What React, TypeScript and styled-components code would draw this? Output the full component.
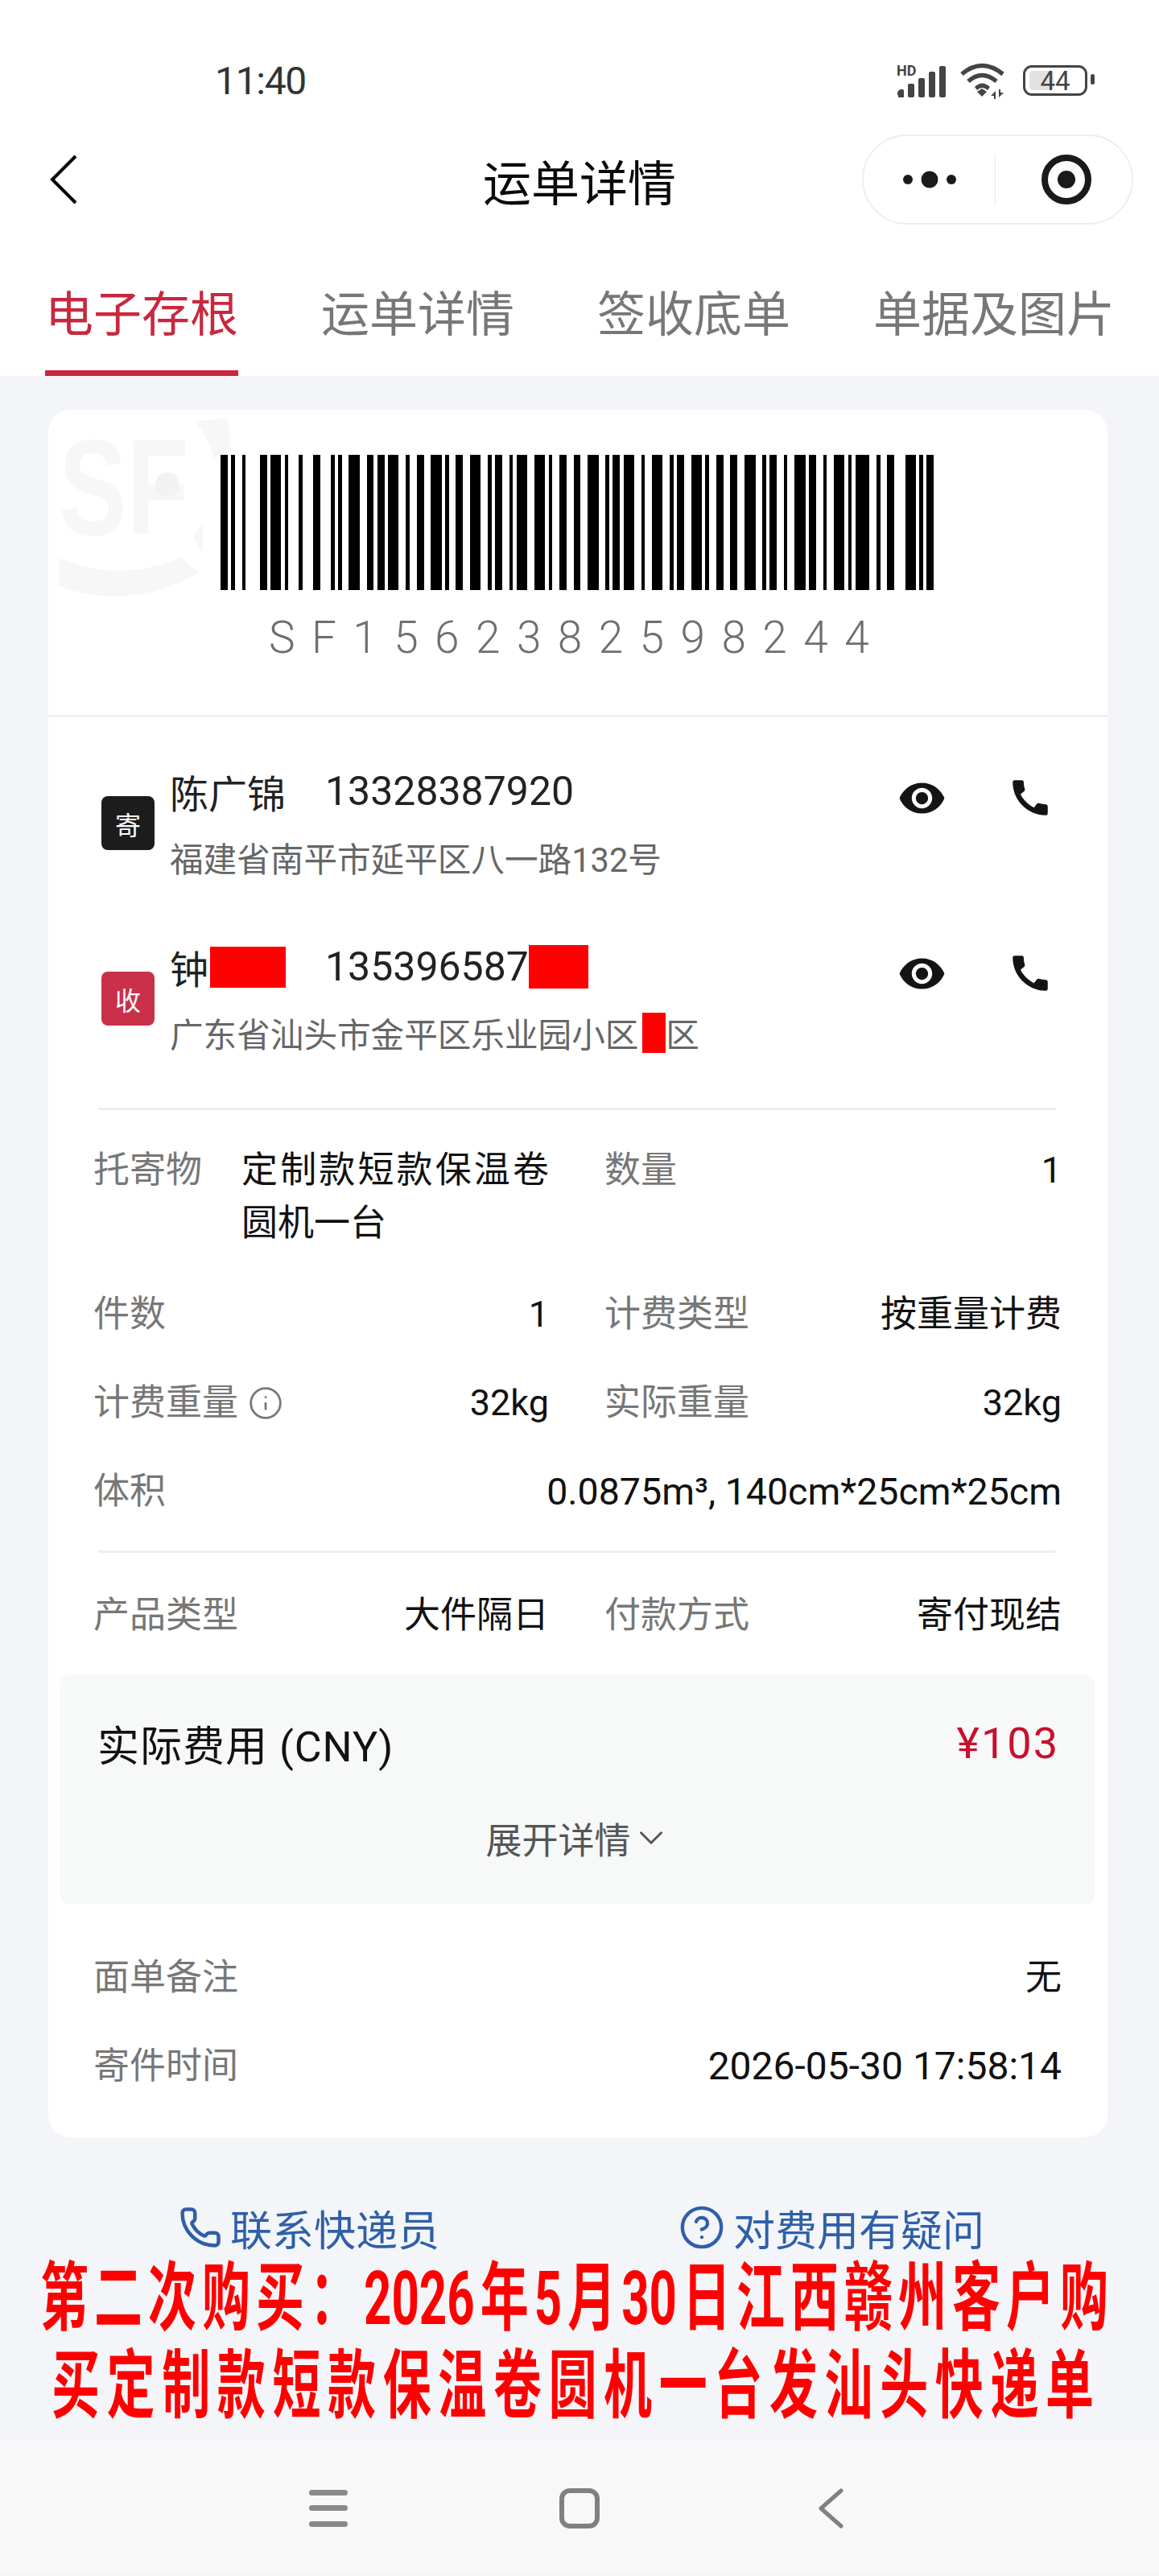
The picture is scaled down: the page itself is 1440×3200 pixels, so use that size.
import styled, { createGlobalStyle } from 'styled-components';
import { MdCall, MdVisibility } from 'react-icons/md';
import { ChevronDown, CircleHelp, Info, Phone } from 'lucide-react';

const GlobalStyle = createGlobalStyle`
  html, body {
    margin: 0;
    padding: 0;
    background: #f3f5f9;
  }
  * {
    box-sizing: border-box;
  }
`;

const Page = styled.div`
  width: 1440px;
  height: 3200px;
  overflow: hidden;
  background: #f3f5f9;
  color: #111;
  font-family: Roboto, 'Noto Sans CJK SC', sans-serif;
`;

const Header = styled.header`
  background: #fff;
`;

const StatusBar = styled.div`
  height: 167px;
  padding: 33px 81px 0 267px;
  display: flex;
  align-items: center;
  justify-content: space-between;
`;

const Clock = styled.span`
  font-size: 48px;
  letter-spacing: -1.3px;
  color: #333;
`;

const StatusIcons = styled.div`
  display: flex;
  align-items: center;
  gap: 17px;
`;

const Battery = styled.div`
  position: relative;
  width: 80px;
  height: 38px;
  margin-right: 8px;
  border: 3.5px solid #444;
  border-radius: 11px;
  display: flex;
  align-items: center;
  justify-content: center;
  font-size: 33px;
  color: #444;

  &::before {
    content: '';
    position: absolute;
    left: 5px;
    top: 4px;
    bottom: 4px;
    width: 30px;
    border-radius: 4px;
    background: #e2e2e2;
  }

  &::after {
    content: '';
    position: absolute;
    right: -12px;
    top: 8px;
    width: 5px;
    height: 13px;
    border-radius: 3px;
    background: #444;
  }
`;

const BatteryLevel = styled.span`
  position: relative;
`;

const NavBar = styled.nav`
  height: 112px;
  padding: 0 32px;
  display: grid;
  grid-template-columns: 1fr auto 1fr;
  align-items: center;
`;

const BackIcon = styled.svg`
  margin-left: 30px;
`;

const NavTitle = styled.h1`
  margin: 0;
  font-size: 60px;
  font-weight: 400;
  color: #0a0a0a;
`;

const Capsule = styled.div`
  justify-self: end;
  width: 337px;
  height: 112px;
  border: 2px solid #eeeeee;
  border-radius: 56px;
  display: flex;
  align-items: center;
`;

const CapsuleCell = styled.div<{ $nudge?: number }>`
  flex: 1;
  padding-left: ${(p) => p.$nudge ?? 0}px;
  display: flex;
  justify-content: center;
  align-items: center;
`;

const CapsuleDivider = styled.div`
  width: 1px;
  height: 64px;
  background: #e8e8e8;
`;

const Tabs = styled.div`
  height: 188px;
  padding: 0 0 0 56px;
  display: flex;
  gap: 103px;
`;

const Tab = styled.div<{ $active?: boolean }>`
  height: 100%;
  padding-top: 76px;
  font-size: 60px;
  line-height: 74px;
  color: ${(p) => (p.$active ? '#c8283f' : '#777')};
  border-bottom: 7px solid ${(p) => (p.$active ? '#c8283f' : 'transparent')};
`;

const Card = styled.main`
  position: relative;
  margin: 42px 64px 0 60px;
  background: #fff;
  border-radius: 28px;
  overflow: hidden;
`;

const Watermark = styled.svg`
  position: absolute;
  left: 0;
  top: 0;
`;

const BarcodeBlock = styled.section`
  position: relative;
  height: 382px;
  padding: 56px 0 0 214px;
  border-bottom: 3px solid #f0f0f0;
`;

const BarcodeInner = styled.div`
  position: relative;
  width: 886px;
  display: flex;
  flex-direction: column;
  align-items: center;
`;

const WaybillNo = styled.div`
  margin-top: 26px;
  font-size: 55px;
  line-height: 66px;
  font-weight: 300;
  letter-spacing: 20.4px;
  color: #6f6f6f;
`;

const People = styled.section`
  padding: 62px 67px 66px 66px;
  display: flex;
  flex-direction: column;
  gap: 79px;
`;

const PersonRow = styled.div`
  display: grid;
  grid-template-columns: 66px 1fr auto;
  column-gap: 19px;
  align-items: center;
`;

const Badge = styled.div<{ $tone: 'dark' | 'red' }>`
  height: 67px;
  border-radius: 8px;
  display: flex;
  align-items: center;
  justify-content: center;
  font-size: 32px;
  color: #fff;
  background: ${(p) => (p.$tone === 'dark' ? '#1c1c1c' : '#c9304a')};
`;

const PersonText = styled.div`
  display: flex;
  flex-direction: column;
  gap: 25px;
`;

const NameLine = styled.div`
  height: 60px;
  display: flex;
  align-items: center;
  font-size: 48px;
  color: #222;
`;

const Name = styled.span`
  width: 193px;
  display: flex;
  align-items: center;
`;

const PhoneNumber = styled.span`
  font-size: 50px;
  display: flex;
  align-items: center;
`;

const AddressLine = styled.div`
  height: 54px;
  display: flex;
  align-items: center;
  font-size: 41.6px;
  color: #666;
`;

const Redact = styled.span<{ $w: number; $h: number; $lead?: number; $gap?: number }>`
  display: inline-block;
  width: ${(p) => p.$w}px;
  height: ${(p) => p.$h}px;
  margin-left: ${(p) => p.$lead ?? 0}px;
  margin-right: ${(p) => p.$gap ?? 0}px;
  background: #ff0000;
`;

const PersonActions = styled.div`
  align-self: start;
  margin-top: 8px;
  height: 60px;
  display: flex;
  align-items: center;
  gap: 75px;
  color: #141414;
`;

const Rule = styled.div`
  height: 3px;
  margin: 0 64px 0 62px;
  background: #eeeeee;
`;

const InfoGrid = styled.section<{ $pad: string }>`
  padding: ${(p) => p.$pad};
  display: grid;
  grid-template-columns: 566px 568px;
  column-gap: 69px;
  row-gap: 50px;
`;

const InfoCell = styled.div<{ $wide?: boolean; $tall?: boolean }>`
  display: flex;
  justify-content: space-between;
  grid-column: ${(p) => (p.$wide ? 'span 2' : 'auto')};
  font-size: 45px;
  line-height: ${(p) => (p.$tall ? '66px' : '60px')};
`;

const InfoLabel = styled.span`
  display: inline-flex;
  align-items: flex-start;
  gap: 12px;
  flex: none;
  color: #777;
`;

const InfoHint = styled.span`
  display: inline-flex;
  height: 60px;
  align-items: center;
`;

const InfoValue = styled.span<{ $size?: number }>`
  color: #111;
  white-space: nowrap;
  font-size: ${(p) => p.$size ?? 45}px;
`;

const GoodsValue = styled.span`
  width: 382px;
  color: #111;
  text-align: justify;
`;

const FeePanel = styled.section`
  margin: 0 16px 0 15px;
  padding: 54px 44px 52px 46px;
  border-radius: 10px;
  background: #f7f8f8;
  display: flex;
  flex-direction: column;
  gap: 58px;
`;

const FeeRow = styled.div`
  display: flex;
  justify-content: space-between;
  align-items: center;
  height: 60px;
  font-size: 52px;
  letter-spacing: 1px;
  color: #111;
`;

const FeeAmount = styled.span`
  font-size: 54px;
  letter-spacing: 2px;
  color: #c8102e;
`;

const Expand = styled.div`
  height: 60px;
  display: flex;
  justify-content: center;
  align-items: center;
  font-size: 45px;
  color: #555;
`;

const Footnotes = styled.section`
  padding: 62px 57px 58px 56px;
  display: flex;
  flex-direction: column;
  gap: 50px;
`;

const Actions = styled.div`
  height: 60px;
  margin-top: 82px;
  padding-left: 222px;
  display: flex;
  gap: 297px;
`;

const ActionLink = styled.a`
  display: flex;
  align-items: center;
  gap: 10px;
  font-size: 52px;
  color: #2f5fa8;
`;

const Notice = styled.section`
  margin: 4px 0 12px;
  display: flex;
  flex-direction: column;
  align-items: flex-start;
`;

const NoticeLine = styled.div<{ $left: number; $width: number }>`
  margin-left: ${(p) => p.$left}px;
  width: ${(p) => p.$width}px;
  height: 109px;
  font-size: 60px;
  line-height: 109px;
  font-weight: 700;
  color: #ff0000;
  white-space: nowrap;
  text-align: justify;
  text-align-last: justify;
  transform: scaleY(1.55);
`;

const BottomNav = styled.nav`
  height: 167px;
  padding-top: 3px;
  background: #f8f8f8;
  display: grid;
  grid-template-columns: repeat(3, 312px);
  justify-content: center;
  align-items: center;
  justify-items: center;
`;

const BARCODE = [
  2, 1, 1, 2, 1, 4, 2, 1, 3, 1, 1, 3, 1, 3, 2, 3, 1, 1, 1, 2, 3, 2, 2, 1, 2, 1, 3, 2, 1, 2, 2, 2, 3, 1, 1, 2,
  2, 2, 3, 2, 1, 1, 2, 2, 1, 1, 3, 2, 3, 1, 1, 2, 2, 2, 2, 2, 3, 2, 1, 1, 2, 1, 3, 2, 1, 2, 3, 2, 1, 1, 2, 2,
  3, 1, 1, 2, 2, 2, 2, 2, 3, 2, 1, 1, 2, 2, 1, 2, 3, 1, 2, 2, 1, 2, 3, 1, 1, 1, 4, 2, 1, 2, 2, 3, 3, 1, 1, 1, 2,
];

function Barcode() {
  let x = 0;
  const bars = BARCODE.map((w, i) => {
    const bar = i % 2 === 0 ? <rect key={i} x={x} y={0} width={w} height={1} fill="#000" /> : null;
    x += w;
    return bar;
  });
  return (
    <svg width={886} height={168} viewBox="0 0 200 1" preserveAspectRatio="none" shapeRendering="crispEdges">
      {bars}
    </svg>
  );
}

function SfWatermark() {
  const tint = '#f6f7f6';
  return (
    <Watermark width={240} height={240} viewBox="0 0 240 240">
      <text
        x={13}
        y={155}
        fontSize={168}
        fontWeight={700}
        fontFamily="'Liberation Sans', sans-serif"
        fill={tint}
        textLength={162}
        lengthAdjust="spacingAndGlyphs"
      >
        SF
      </text>
      <circle cx={148} cy={93} r={15} fill="#f1f2f1" />
      <path d="M13 184 Q90 216 165 183 L187 203 Q100 251 13 219 Z" fill={tint} />
      <path d="M182 14 L222 11 Q228 30 224 56 L205 60 Q200 35 182 14 Z" fill={tint} />
      <path d="M192 140 L192 178 L180 158 Z" fill={tint} />
    </Watermark>
  );
}

function StatusGlyphs() {
  return (
    <svg width={140} height={46} viewBox="0 0 140 46">
      <text x={0} y={17} fontSize={18} fontWeight={700} fill="#444" fontFamily="Roboto, sans-serif">
        HD
      </text>
      <path d="M2 42 a5 5 0 0 1 7 -7 v9 h-7 z" fill="#444" />
      <rect x={14} y={27} width={8} height={17} rx={2} fill="#444" />
      <rect x={27} y={20} width={8} height={24} rx={2} fill="#444" />
      <rect x={40} y={12} width={8} height={32} rx={2} fill="#444" />
      <rect x={53} y={5} width={8} height={39} rx={2} fill="#444" />
      <g fill="none" stroke="#444" strokeWidth={5.5}>
        <path d="M81 15 Q106 -6 132 15" />
        <path d="M89 24 Q106 9 124 24" />
      </g>
      <path d="M97 31 Q106 22 116 31 L113 35 Q106 29 100 35 Z" fill="#444" />
      <path d="M100 37 L106 33 L112 37 L106 43 Z" fill="#444" />
      <path d="M117 42 L123 36 V46 H121 V42 Z M127 34 H129 V38 L133 38 L127 44 Z" fill="#444" />
    </svg>
  );
}

export default function App() {
  return (
    <Page>
      <GlobalStyle />
      <Header>
        <StatusBar>
          <Clock>11:40</Clock>
          <StatusIcons>
            <StatusGlyphs />
            <Battery>
              <BatteryLevel>44</BatteryLevel>
            </Battery>
          </StatusIcons>
        </StatusBar>
        <NavBar>
          <BackIcon width={34} height={62} viewBox="0 0 34 62">
            <polyline points="32,2 3,31 32,60" fill="none" stroke="#000" strokeWidth={4} />
          </BackIcon>
          <NavTitle>运单详情</NavTitle>
          <Capsule>
            <CapsuleCell>
              <svg width={66} height={24} viewBox="0 0 66 24" fill="#1a1a1a">
                <circle cx={6} cy={12} r={6} />
                <circle cx={33} cy={12} r={10.5} />
                <circle cx={60} cy={12} r={6} />
              </svg>
            </CapsuleCell>
            <CapsuleDivider />
            <CapsuleCell $nudge={6}>
              <svg width={64} height={64} viewBox="0 0 64 64">
                <circle cx={32} cy={32} r={27} fill="none" stroke="#1a1a1a" strokeWidth={8} />
                <circle cx={32} cy={32} r={11} fill="#1a1a1a" />
              </svg>
            </CapsuleCell>
          </Capsule>
        </NavBar>
        <Tabs>
          <Tab $active>电子存根</Tab>
          <Tab>运单详情</Tab>
          <Tab>签收底单</Tab>
          <Tab>单据及图片</Tab>
        </Tabs>
      </Header>

      <Card>
        <BarcodeBlock>
          <SfWatermark />
          <BarcodeInner>
            <Barcode />
            <WaybillNo>SF1562382598244</WaybillNo>
          </BarcodeInner>
        </BarcodeBlock>

        <People>
          <PersonRow>
            <Badge $tone="dark">寄</Badge>
            <PersonText>
              <NameLine>
                <Name>陈广锦</Name>
                <PhoneNumber>13328387920</PhoneNumber>
              </NameLine>
              <AddressLine>福建省南平市延平区八一路132号</AddressLine>
            </PersonText>
            <PersonActions>
              <MdVisibility size={61} />
              <MdCall size={58} />
            </PersonActions>
          </PersonRow>
          <PersonRow>
            <Badge $tone="red">收</Badge>
            <PersonText>
              <NameLine>
                <Name>
                  钟<Redact $w={94} $h={51} $lead={2} />
                </Name>
                <PhoneNumber>
                  135396587
                  <Redact $w={74} $h={54} />
                </PhoneNumber>
              </NameLine>
              <AddressLine>
                广东省汕头市金平区乐业园小区
                <Redact $w={29} $h={50} $lead={5} />区
              </AddressLine>
            </PersonText>
            <PersonActions>
              <MdVisibility size={61} />
              <MdCall size={58} />
            </PersonActions>
          </PersonRow>
        </People>

        <Rule />

        <InfoGrid $pad="42px 57px 43px 56px">
          <InfoCell $tall>
            <InfoLabel>托寄物</InfoLabel>
            <GoodsValue>定制款短款保温卷圆机一台</GoodsValue>
          </InfoCell>
          <InfoCell $tall>
            <InfoLabel>数量</InfoLabel>
            <InfoValue>1</InfoValue>
          </InfoCell>
          <InfoCell>
            <InfoLabel>件数</InfoLabel>
            <InfoValue>1</InfoValue>
          </InfoCell>
          <InfoCell>
            <InfoLabel>计费类型</InfoLabel>
            <InfoValue>按重量计费</InfoValue>
          </InfoCell>
          <InfoCell>
            <InfoLabel>
              计费重量
              <InfoHint>
                <Info size={44} strokeWidth={1.5} />
              </InfoHint>
            </InfoLabel>
            <InfoValue>32kg</InfoValue>
          </InfoCell>
          <InfoCell>
            <InfoLabel>实际重量</InfoLabel>
            <InfoValue>32kg</InfoValue>
          </InfoCell>
          <InfoCell $wide>
            <InfoLabel>体积</InfoLabel>
            <InfoValue $size={46.5}>0.0875m³, 140cm*25cm*25cm</InfoValue>
          </InfoCell>
        </InfoGrid>

        <Rule />

        <InfoGrid $pad="48px 57px 44px 56px">
          <InfoCell>
            <InfoLabel>产品类型</InfoLabel>
            <InfoValue>大件隔日</InfoValue>
          </InfoCell>
          <InfoCell>
            <InfoLabel>付款方式</InfoLabel>
            <InfoValue>寄付现结</InfoValue>
          </InfoCell>
        </InfoGrid>

        <FeePanel>
          <FeeRow>
            实际费用 (CNY)
            <FeeAmount>¥103</FeeAmount>
          </FeeRow>
          <Expand>
            展开详情
            <ChevronDown size={50} strokeWidth={1.4} />
          </Expand>
        </FeePanel>

        <Footnotes>
          <InfoCell>
            <InfoLabel>面单备注</InfoLabel>
            <InfoValue>无</InfoValue>
          </InfoCell>
          <InfoCell>
            <InfoLabel>寄件时间</InfoLabel>
            <InfoValue $size={48}>2026-05-30 17:58:14</InfoValue>
          </InfoCell>
        </Footnotes>
      </Card>

      <Actions>
        <ActionLink>
          <Phone size={54} strokeWidth={2} />
          联系快递员
        </ActionLink>
        <ActionLink>
          <CircleHelp size={58} strokeWidth={1.8} />
          对费用有疑问
        </ActionLink>
      </Actions>

      <Notice>
        <NoticeLine $left={50} $width={1327}>
          第二次购买：2026年5月30日江西赣州客户购
        </NoticeLine>
        <NoticeLine $left={64} $width={1295}>
          买定制款短款保温卷圆机一台发汕头快递单
        </NoticeLine>
      </Notice>

      <BottomNav>
        <svg width={48} height={46} viewBox="0 0 48 46" fill="#8a8a8a">
          <rect x={0} y={0} width={48} height={7} rx={3.5} />
          <rect x={0} y={19} width={48} height={7} rx={3.5} />
          <rect x={0} y={39} width={48} height={7} rx={3.5} />
        </svg>
        <svg width={50} height={50} viewBox="0 0 50 50">
          <rect x={3} y={3} width={44} height={44} rx={10} fill="none" stroke="#808080" strokeWidth={6} />
        </svg>
        <svg width={32} height={50} viewBox="0 0 32 50">
          <polyline
            points="29,3 4,25 29,47"
            fill="none"
            stroke="#808080"
            strokeWidth={5}
            strokeLinecap="round"
            strokeLinejoin="round"
          />
        </svg>
      </BottomNav>
    </Page>
  );
}
